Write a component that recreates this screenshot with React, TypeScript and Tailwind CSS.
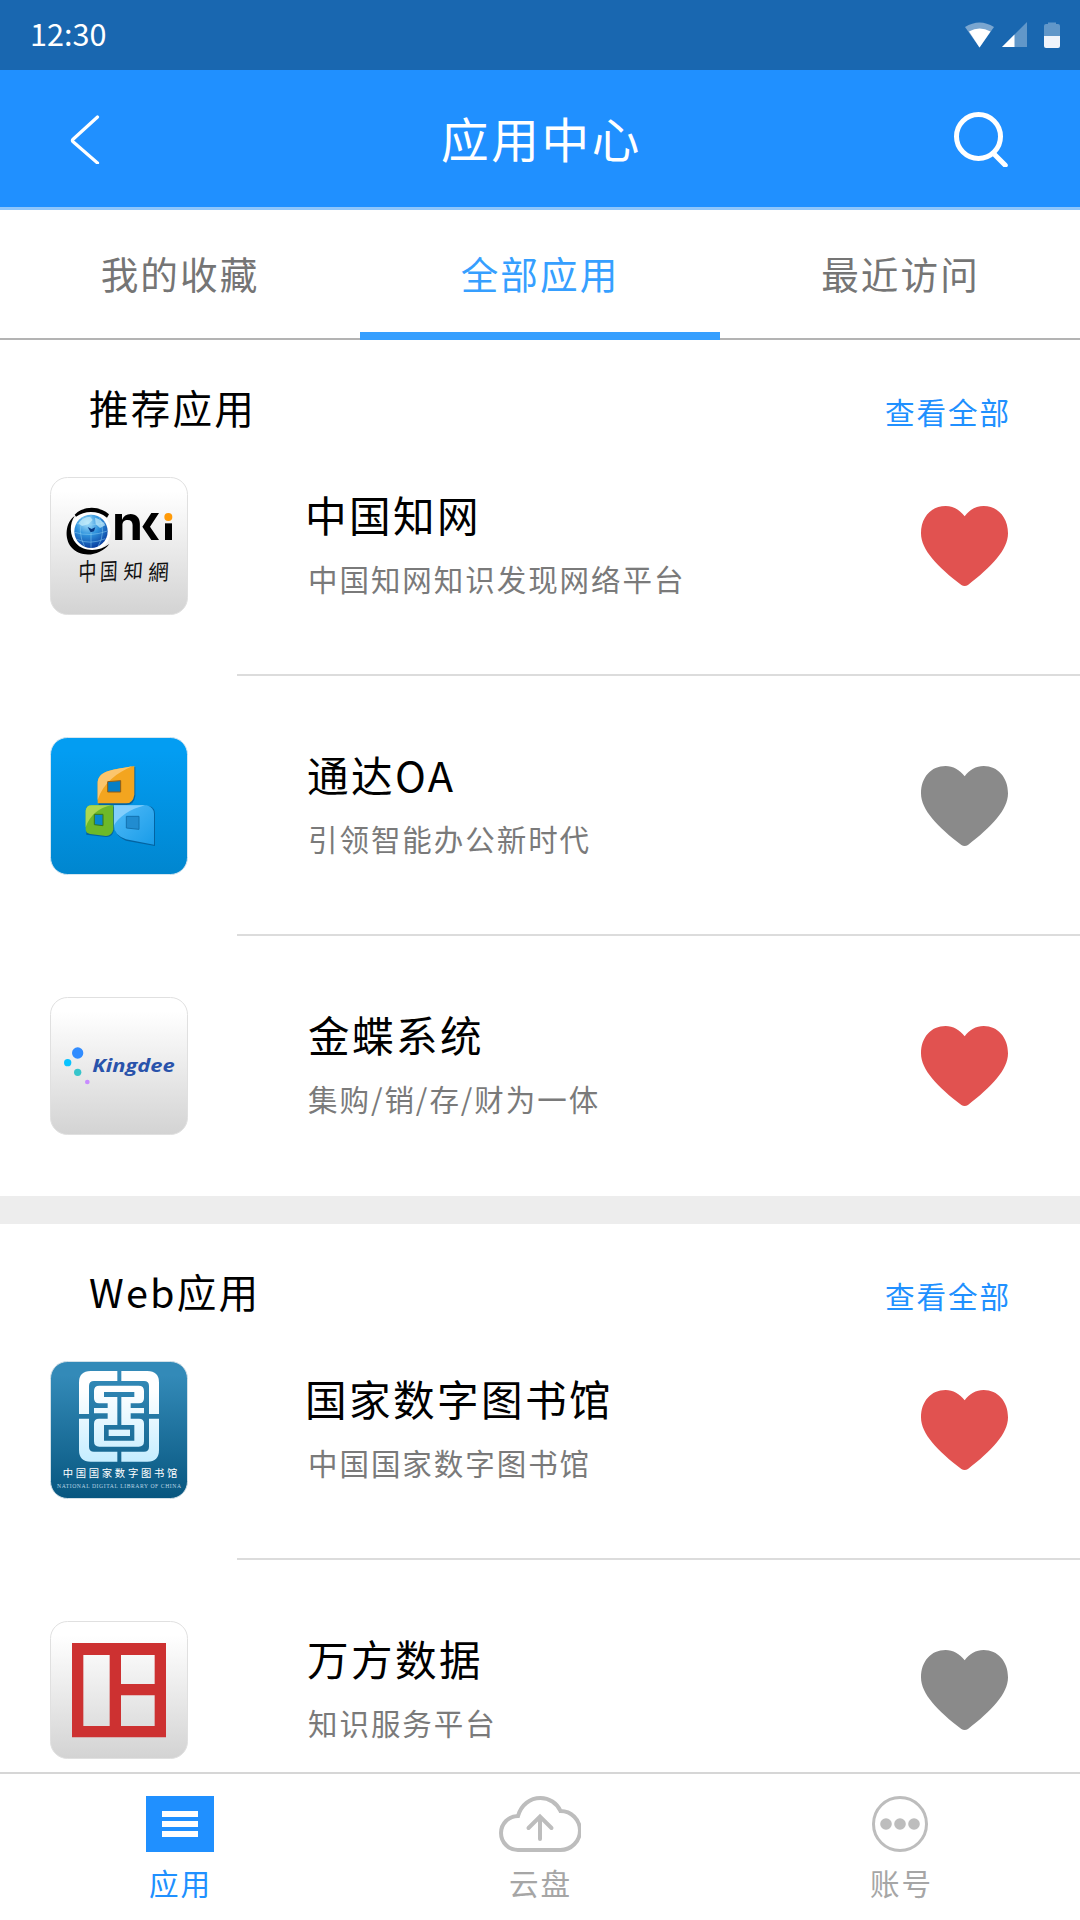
import type { ReactNode } from 'react';

const cjk = '"Noto Sans CJK SC", sans-serif';

function Tile({ id, viewBox, from, to, border, children }: {
  id: string; viewBox: string; from: string; to: string; border: string; children: ReactNode;
}) {
  const [x, y] = viewBox.split(' ').map(Number);
  return (
    <svg className="h-[138px] w-[138px] shrink-0" viewBox={viewBox}>
      <defs>
        <linearGradient id={id} x1="0" y1="0" x2="0" y2="1">
          <stop offset="0.1" stopColor={from} />
          <stop offset="1" stopColor={to} />
        </linearGradient>
      </defs>
      <rect x={x + 1.5} y={y + 1.5} width="411" height="411" rx="51" fill={`url(#${id})`} stroke={border} strokeWidth="3" />
      {children}
    </svg>
  );
}

function CnkiIcon() {
  return (
    <Tile id="tileCnki" viewBox="30 321 414 414" from="#ffffff" to="#d3d3d3" border="#e0e0e0">
      <defs>
        <radialGradient id="globe" cx="0.4" cy="0.25" r="0.8">
          <stop offset="0" stopColor="#a9e2fb" />
          <stop offset="0.45" stopColor="#2f93dd" />
          <stop offset="1" stopColor="#06379b" />
        </radialGradient>
      </defs>
      <circle cx="152" cy="483" r="60" fill="#fff" />
      <path d="M104 434C128 408 178 406 207 433L201 443C172 420 134 422 108 440Z" fill="#000" />
      <path d="M104 438C76 456 72 506 94 532C124 566 180 558 208 522C178 546 130 546 108 520C88 497 88 460 104 438Z" fill="#000" />
      <circle cx="153" cy="484" r="50" fill="url(#globe)" />
      <g fill="none" stroke="#8fd3f5" strokeWidth="2" opacity="0.75">
        <path d="M104 487Q150 502 202 483M110 508Q150 526 196 506M110 461Q150 470 195 458M153 434V534M130 440Q110 485 134 530M177 440Q200 485 174 530" />
      </g>
      <path d="M115 460Q128 441 150 440L158 450L145 463L126 468ZM165 443Q188 449 196 466L180 474L167 462Z" fill="#c7eefb" opacity="0.7" />
      <path d="M143 471L155 477L166 472L162 484L152 487Z" fill="#073984" />
      <text x="216" y="510" fontFamily="Inter, sans-serif" fontWeight="700" fontSize="145" textLength="93" lengthAdjust="spacingAndGlyphs">n</text>
      <path d="M334 429H357L330 470L357 510H334L307 470Z" fill="#000" />
      <rect x="375" y="460" width="21" height="50" fill="#000" />
      <circle cx="385" cy="441" r="12" fill="#ff9a08" />
      <g fontFamily={cjk} fontWeight="400" fontSize="62" fill="#111">
        <text transform="translate(115 635) rotate(-5) skewX(-6) scale(.88 1.2)">中</text>
        <text transform="translate(179 631) rotate(-3) skewX(-5) scale(.85 1.12)">国</text>
        <text transform="translate(249 628) rotate(-6) skewX(-10) scale(.95 .95)">知</text>
        <text transform="translate(323 632) rotate(-3) skewX(-6) scale(1 1.05)">網</text>
      </g>
    </Tile>
  );
}

function TongdaIcon() {
  return (
    <Tile id="tileTongda" viewBox="30 51 414 414" from="#039df2" to="#0086cf" border="#d5e6f0">
      <defs>
        <linearGradient id="azure" x1="0" y1="0" x2="1" y2="1">
          <stop offset="0.2" stopColor="#45b4f5" />
          <stop offset="1" stopColor="#199ce8" />
        </linearGradient>
      </defs>
      <g fill="#05528a" opacity="0.7">
        <path d="M176 255V196C176 158 210 154 286 141V228Q282 254 260 255Z" />
        <path d="M140 260H222V330Q218 352 198 351L139 344Z" />
        <path d="M224 258H330Q346 266 345 282V378L258 362Q224 348 224 318Z" />
      </g>
      <path d="M173 250V192C173 154 207 151 283 138V224Q279 250 258 250Z" fill="#f3a51f" />
      <path d="M173 240V192C173 154 207 151 277 139C232 158 190 188 173 240Z" fill="#fbc56c" />
      <path d="M137 272Q139 256 155 256H220V328Q216 348 198 348L150 342Q137 339 137 328Z" fill="#6db929" />
      <path d="M137 322V272Q139 256 155 256H214C180 262 150 284 137 322Z" fill="#abd850" />
      <path d="M222 256H320Q342 262 342 282V374L258 358Q222 345 222 318Z" fill="url(#azure)" />
      <path d="M222 316V256H315C268 268 238 290 222 316Z" fill="#82cefc" />
      <g strokeWidth="3">
        <path d="M203 185L242 182V216H203Z" fill="#057fc5" stroke="#925d12" />
        <path d="M163 283H189V317L163 314Z" fill="#0688cb" stroke="#397719" />
        <path d="M259 289H297V328L259 324Z" fill="#218cd0" stroke="#1372af" />
      </g>
    </Tile>
  );
}

function KingdeeIcon() {
  return (
    <Tile id="tileKingdee" viewBox="30 51 414 414" from="#ffffff" to="#d3d3d3" border="#e0e0e0">
      <circle cx="113" cy="219" r="17" fill="#318cff" />
      <circle cx="83" cy="248" r="11" fill="#08c3ff" />
      <circle cx="113" cy="277" r="11" fill="#36c5cb" />
      <circle cx="142" cy="306" r="7" fill="#c88cff" />
      <text x="157" y="277" fontFamily="Open Sans, sans-serif" fontStyle="italic" fontWeight="700" fontSize="55" fill="#2953ab" textLength="247" lengthAdjust="spacingAndGlyphs">Kingdee</text>
    </Tile>
  );
}

function LibraryIcon() {
  return (
    <Tile id="tileLibrary" viewBox="30 33 414 414" from="#338ab8" to="#07567f" border="#d3e0e7">
      <defs>
        <linearGradient id="seal" gradientUnits="userSpaceOnUse" x1="0" y1="63" x2="0" y2="335">
          <stop offset="0.2" stopColor="#ffffff" />
          <stop offset="1" stopColor="#c5edff" />
        </linearGradient>
      </defs>
      <g fill="url(#seal)">
        <path d="M117 192V98Q117 63 152 63H232V93H162Q147 93 147 108V192Z" />
        <path d="M244 63H322Q357 63 357 98V192H327V108Q327 93 312 93H244Z" />
        <path d="M117 206H147V290Q147 305 162 305H232V335H152Q117 335 117 300Z" />
        <path d="M327 206H357V300Q357 335 322 335H244V305H312Q327 305 327 290Z" />
        <path fillRule="evenodd" d="M178 107H296Q312 107 312 123V145Q312 160 297 160H272V174H312V190H272V206H297Q312 206 312 221V274Q312 290 296 290H178Q162 290 162 274V221Q162 206 177 206H203V190H162V174H203V160H177Q162 160 162 145V123Q162 107 178 107ZM192 126V141H232V225H192V272H283V225H244V141H283V126Z" />
        <rect x="206" y="239" width="64" height="19" />
      </g>
      <text x="68" y="382" fontFamily={cjk} fontWeight="400" fontSize="31" fill="#fff" textLength="344">中国国家数字图书馆</text>
      <text x="51" y="415" fontFamily="Liberation Serif, serif" fontSize="17" fill="#b8d5e4" textLength="372">NATIONAL DIGITAL LIBRARY OF CHINA</text>
    </Tile>
  );
}

function WanfangIcon() {
  return (
    <Tile id="tileWanfang" viewBox="30 33 414 414" from="#ffffff" to="#d3d3d3" border="#e0e0e0">
      <path fillRule="evenodd" fill="#cd3131" d="M96 99H378V382H96ZM130 135V348H209V135ZM243 135V222H344V135ZM243 256V348H344V256Z" />
    </Tile>
  );
}

function Heart({ active }: { active: boolean }) {
  return (
    <svg className={active ? 'h-20 w-[87px] text-[#e15250]' : 'h-20 w-[87px] text-[#8a8a8a]'} viewBox="0 0 261 240">
      <path
        fill="currentColor"
        d="M131 31C116 11 96 0 74 0C30 0 0 34 0 82C0 132 50 183 121 237Q131 243 141 237C211 183 261 132 261 82C261 34 230 0 188 0C165 0 145 11 131 31Z"
      />
    </svg>
  );
}

type AppItem = { name: string; desc: string; liked: boolean; icon: ReactNode; inset: string };

function AppRow({ item, last }: { item: AppItem; last: boolean }) {
  return (
    <div className="flex h-[260px] pl-[50px]">
      <div className="flex items-center">{item.icon}</div>
      <div className={last ? 'ml-[49px] flex flex-1 items-center' : 'ml-[49px] flex flex-1 items-center border-b-2 border-[#dcdcdc]'}>
        <div className="h-full flex-1 pl-[68px] pt-[68px]">
          <div className={`text-[41.6px] leading-[60px] tracking-[2.4px] text-black ${item.inset}`}>{item.name}</div>
          <div className="mt-3 pl-[3px] text-[29.5px] leading-[44px] tracking-[1.95px] text-[#7a7a7a]">{item.desc}</div>
        </div>
        <div className={last ? 'mr-[72px]' : 'mr-[72px] pt-0.5'}><Heart active={item.liked} /></div>
      </div>
    </div>
  );
}

function Section({ title, items, lastLine }: { title: string; items: AppItem[]; lastLine: boolean }) {
  return (
    <section>
      <div className="flex h-[76px] justify-between pl-[89px] pr-[69px]">
        <h2 className="pt-[37px] text-[39.6px] leading-[60px] tracking-[2.2px] text-black">{title}</h2>
        <a className="pt-[42px] text-[29.6px] leading-[60px] tracking-[1.9px] text-[#2090ff]">查看全部</a>
      </div>
      {items.map((item, i) => (
        <AppRow key={item.name} item={item} last={!lastLine && i === items.length - 1} />
      ))}
    </section>
  );
}

const recommended: AppItem[] = [
  { name: '中国知网', desc: '中国知网知识发现网络平台', liked: true, icon: <CnkiIcon />, inset: 'pl-0' },
  { name: '通达OA', desc: '引领智能办公新时代', liked: false, icon: <TongdaIcon />, inset: 'pl-0.5' },
  { name: '金蝶系统', desc: '集购/销/存/财为一体', liked: true, icon: <KingdeeIcon />, inset: 'pl-[3px]' },
];

const web: AppItem[] = [
  { name: '国家数字图书馆', desc: '中国国家数字图书馆', liked: true, icon: <LibraryIcon />, inset: 'pl-0' },
  { name: '万方数据', desc: '知识服务平台', liked: false, icon: <WanfangIcon />, inset: 'pl-0.5' },
];

function StatusBar() {
  return (
    <div className="flex h-[70px] shrink-0 items-center justify-between bg-[#1967b0] pl-[30px] pr-[20px] text-white">
      <span className="text-[30.6px] leading-[66px] pb-1">12:30</span>
      <svg className="h-[26px] w-[95px]" viewBox="0 0 95 26">
        <path d="M0 5Q14.500 -4 29 5L14.500 25.500Z" fill="#7aa6d0" />
        <path d="M4 9.500Q14.500 3.500 25.500 9.500L14.500 25.500Z" fill="#fff" />
        <path d="M62 0V25H37Z" fill="#6197c9" />
        <path d="M49.500 12.500V25H37Z" fill="#fff" />
        <path d="M79 14V4Q79 2 81 2H83V0.500H91V2H93Q95 2 95 4V14Z" fill="#6197c9" />
        <path d="M79 14H95V24Q95 26 93 26H81Q79 26 79 24Z" fill="#f0f4fb" />
      </svg>
    </div>
  );
}

function Header() {
  return (
    <header className="flex h-[140px] shrink-0 items-center justify-between border-b-[3px] border-[#8fc6fb] bg-[#2090ff] pl-[70px] pr-[71px] text-white">
      <svg className="h-[50px] w-[56px]" viewBox="0 0 56 50" fill="none" stroke="currentColor" strokeWidth="3.2" strokeLinecap="round" strokeLinejoin="round">
        <path d="M27.500 3L2.800 25.500Q2 26.500 2.800 27.500L27.500 49" />
      </svg>
      <h1 className="pb-px pl-1 text-[47.6px] leading-[70px] tracking-[2.6px]">应用中心</h1>
      <svg className="h-[56px] w-[56px]" viewBox="0 0 56 56" fill="none" stroke="currentColor" strokeWidth="5">
        <circle cx="25.500" cy="25.500" r="22" />
        <path d="M40.300 42.300L52.300 54.300" strokeLinecap="round" />
      </svg>
    </header>
  );
}

function Tabs() {
  return (
    <div className="grid h-[130px] shrink-0 grid-cols-3 grid-rows-[130px] text-center text-[37.6px] leading-[126px] tracking-[2.1px] text-[#757575]">
      <div className="border-b-2 border-[#b3b3b3]">我的收藏</div>
      <div className="border-b-8 border-[#369fff] text-[#369fff]">全部应用</div>
      <div className="border-b-2 border-[#b3b3b3] pl-px">最近访问</div>
    </div>
  );
}

function BottomNav() {
  return (
    <nav className="grid h-[148px] shrink-0 grid-cols-3 border-t-2 border-[#d6d6d6] bg-white pt-[22px] text-[29.6px] leading-[44px] tracking-[1.9px] text-[#a6a6a6]">
      <div className="flex flex-col items-center text-[#2090ff]">
        <div className="flex h-14 w-[68px] flex-col items-center justify-center gap-1 bg-[#2090ff]">
          <i className="h-1.5 w-9 bg-white" />
          <i className="h-1.5 w-9 bg-white" />
          <i className="h-1.5 w-9 bg-white" />
        </div>
        <span className="mt-[9px] pl-px">应用</span>
      </div>
      <div className="flex flex-col items-center">
        <svg className="h-14 w-[82px]" viewBox="0 0 82 56" fill="none" stroke="#bdbdbd" strokeWidth="4">
          <path d="M19 54A16.800 16.800 0 0 1 19 20C22 9 31 2 41.500 2C50 2 58 7 61.500 15A19.400 19.400 0 0 1 61.500 54Z" />
          <path d="M29.500 32L41 20.500L52.500 32M41 21V43" strokeLinecap="round" />
        </svg>
        <span className="mt-[9px] pl-px">云盘</span>
      </div>
      <div className="flex flex-col items-center">
        <svg className="h-14 w-14" viewBox="0 0 56 56" fill="#bdbdbd">
          <circle cx="28" cy="28" r="26.500" fill="none" stroke="#bdbdbd" strokeWidth="3" />
          <circle cx="14" cy="28" r="5.800" />
          <circle cx="28" cy="28" r="5.800" />
          <circle cx="42" cy="28" r="5.800" />
        </svg>
        <span className="mt-[9px] pl-[3px]">账号</span>
      </div>
    </nav>
  );
}

export default function App() {
  return (
    <div className="flex h-[1920px] w-[1080px] flex-col overflow-hidden bg-white font-['Noto_Sans_CJK_SC',sans-serif]">
      <StatusBar />
      <Header />
      <Tabs />
      <main className="min-h-0 flex-1 overflow-hidden">
        <Section title="推荐应用" items={recommended} lastLine={false} />
        <div className="h-7 bg-[#ededed]" />
        <Section title="Web应用" items={web} lastLine />
      </main>
      <BottomNav />
    </div>
  );
}
